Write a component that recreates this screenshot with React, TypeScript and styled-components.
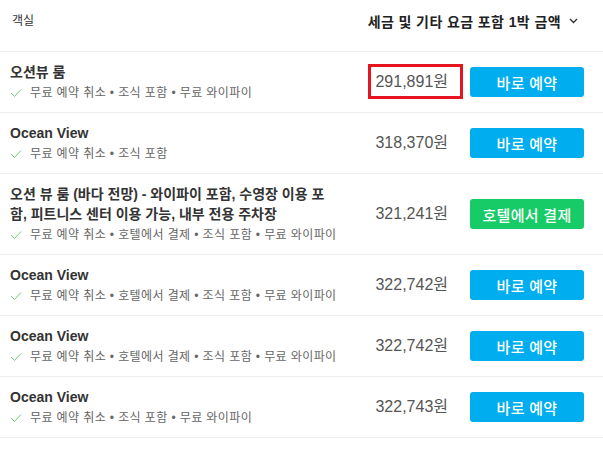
import styled, { createGlobalStyle } from 'styled-components';

interface Room {
  name: string;
  features: string[];
  price: string;
  action: 'book' | 'hotel';
  highlight?: boolean;
}

const rooms: Room[] = [
  { name: '오션뷰 룸', features: ['무료 예약 취소', '조식 포함', '무료 와이파이'], price: '291,891원', action: 'book', highlight: true },
  { name: 'Ocean View', features: ['무료 예약 취소', '조식 포함'], price: '318,370원', action: 'book' },
  {
    name: '오션 뷰 룸 (바다 전망) - 와이파이 포함, 수영장 이용 포함, 피트니스 센터 이용 가능, 내부 전용 주차장',
    features: ['무료 예약 취소', '호텔에서 결제', '조식 포함', '무료 와이파이'],
    price: '321,241원',
    action: 'hotel',
  },
  { name: 'Ocean View', features: ['무료 예약 취소', '호텔에서 결제', '조식 포함', '무료 와이파이'], price: '322,742원', action: 'book' },
  { name: 'Ocean View', features: ['무료 예약 취소', '호텔에서 결제', '조식 포함', '무료 와이파이'], price: '322,742원', action: 'book' },
  { name: 'Ocean View', features: ['무료 예약 취소', '조식 포함', '무료 와이파이'], price: '322,743원', action: 'book' },
];

const GlobalStyle = createGlobalStyle`
  body {
    margin: 0;
    background: #fff;
    font-family: "Liberation Sans", "Noto Sans CJK KR", sans-serif;
  }
`;

const Page = styled.div`
  width: 603px;
  background: #fff;
`;

const Header = styled.div`
  display: flex;
  align-items: center;
  justify-content: space-between;
  height: 52px;
  padding: 0 25px 0 12px;
  border-bottom: 1px solid #eee;
  box-sizing: border-box;
`;

const HeaderLabel = styled.span`
  font-size: 12px;
  color: #333;
  margin-top: -13px;
`;

const SortTitle = styled.div`
  display: flex;
  align-items: center;
  gap: 8px;
  font-size: 14px;
  font-weight: bold;
  letter-spacing: 0.4px;
  color: #222;
  margin-top: -10px;
`;

const Row = styled.div`
  display: flex;
  align-items: center;
  min-height: 60px;
  padding: 10px 19px 10px 10px;
  border-bottom: 1px solid #eee;
  box-sizing: border-box;
`;

const Info = styled.div`
  flex: 1;
  min-width: 0;
  padding-right: 17px;
`;

const RoomName = styled.div`
  font-size: 14px;
  font-weight: bold;
  line-height: 20px;
  color: #333;
`;

const Features = styled.div`
  display: flex;
  align-items: center;
  margin-top: 2px;
  font-size: 12px;
  line-height: 18px;
  letter-spacing: 0.4px;
  color: #666;
  white-space: nowrap;

  svg {
    margin-right: 8px;
    flex-shrink: 0;
  }
`;

const PriceCol = styled.div`
  width: 96px;
  text-align: right;
`;

const Price = styled.span<{ $highlight?: boolean }>`
  position: relative;
  font-size: 16px;
  line-height: 20px;
  color: #555;

  &::after {
    content: '';
    display: ${(p) => (p.$highlight ? 'block' : 'none')};
    position: absolute;
    left: -7px;
    right: -15px;
    top: -9px;
    bottom: -9px;
    border: 3px solid #e5141e;
  }
`;

const ActionButton = styled.button<{ $variant: 'book' | 'hotel' }>`
  width: 114px;
  height: 30px;
  margin-left: 22px;
  border: none;
  border-radius: 3px;
  background: ${(p) => (p.$variant === 'hotel' ? '#17cc66' : '#00aeef')};
  color: #fff;
  font-family: "Liberation Sans", "Noto Sans CJK KR", sans-serif;
  font-size: 15px;
  font-weight: 500;
  letter-spacing: 0.3px;
  cursor: pointer;
`;

const Check = () => (
  <svg width="12" height="10" viewBox="0 0 12 10">
    <path d="M1 5 L4.5 8.5 L11 1.5" fill="none" stroke="#6fcf7a" strokeWidth="1" />
  </svg>
);

const Chevron = () => (
  <svg width="9" height="6" viewBox="0 0 9 6">
    <path d="M1 1 L4.5 4.5 L8 1" fill="none" stroke="#333" strokeWidth="1.4" />
  </svg>
);

const App = () => {
  return (
    <Page>
      <GlobalStyle />
      <Header>
        <HeaderLabel>객실</HeaderLabel>
        <SortTitle>
          세금 및 기타 요금 포함 1박 금액
          <Chevron />
        </SortTitle>
      </Header>
      {rooms.map((room, i) => (
        <Row key={i}>
          <Info>
            <RoomName>{room.name}</RoomName>
            <Features>
              <Check />
              {room.features.join(' • ')}
            </Features>
          </Info>
          <PriceCol>
            <Price $highlight={room.highlight}>{room.price}</Price>
          </PriceCol>
          <ActionButton $variant={room.action}>{room.action === 'hotel' ? '호텔에서 결제' : '바로 예약'}</ActionButton>
        </Row>
      ))}
    </Page>
  );
};

export default App;
